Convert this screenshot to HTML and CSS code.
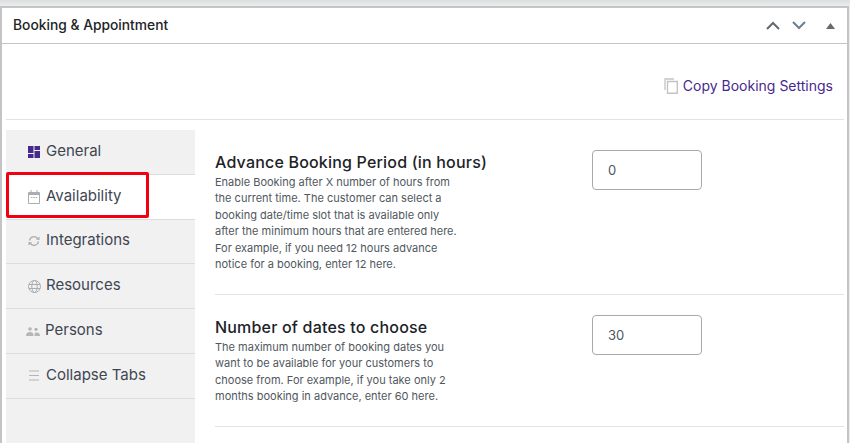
FILE: index.html
```html
<!DOCTYPE html>
<html lang="en">
<head>
<meta charset="utf-8">
<title>Booking &amp; Appointment</title>
<link rel="stylesheet" href="styles.css">
</head>
<body>
<div class="panel">
  <header class="panel-head">
    <h2 class="panel-title">Booking &amp; Appointment</h2>
    <div class="panel-actions">
      <svg class="chev" width="14" height="9" viewBox="0 0 14 9"><path d="M1 8l6-6 6 6" fill="none" stroke="#646970" stroke-width="2"/></svg>
      <svg class="chev" width="14" height="9" viewBox="0 0 14 9"><path d="M1 1l6 6 6-6" fill="none" stroke="#6a7f92" stroke-width="2"/></svg>
      <svg class="tri" width="9" height="6" viewBox="0 0 9 6"><path d="M4.5 0L9 6H0z" fill="#646970"/></svg>
    </div>
  </header>
  <div class="panel-body">
    <div class="copy-row">
      <a class="copy-link">
        <svg width="14" height="16" viewBox="0 0 14 16"><path d="M10 1H1v11" fill="none" stroke="#c3c4c7" stroke-width="1.3"/><path d="M3.5 3.5h9.8v11.8H3.5z" fill="none" stroke="#c3c4c7" stroke-width="1.4"/></svg>
        Copy Booking Settings
      </a>
    </div>
    <div class="layout">
      <nav class="tabs">
        <div class="tab">
          <svg class="ico" width="12" height="12" viewBox="0 0 12 12"><path d="M0 0h5.5v7H0zM6.5 0H12v4H6.5zM0 8h5.5v4H0zM6.5 5H12v7H6.5z" fill="#46298f"/></svg>
          <span class="tab-label">General</span>
        </div>
        <div class="tab tab-active">
          <svg class="ico" width="12" height="14" viewBox="0 0 12 14"><path d="M2.5 0h1v2h5V0h1v2H11a1 1 0 0 1 1 1v10a1 1 0 0 1-1 1H1a1 1 0 0 1-1-1V3a1 1 0 0 1 1-1h1.500zM1 5v8h10V5z" fill="#a9acb0"/><path d="M3 7h1.500v1H3zM5.300 7h1.500v1H5.300zM7.600 7h1.500v1H7.600z" fill="#a9acb0"/></svg>
          <span class="tab-label">Availability</span>
        </div>
        <div class="tab">
          <svg class="ico" width="14" height="12" viewBox="0 0 13 12"><path d="M2 5.500a4.500 4.500 0 0 1 8-2M11 6.500a4.500 4.500 0 0 1-8 2" fill="none" stroke="#a9acb0" stroke-width="1.300"/><path d="M8.500 4.500L12 5V1.500zM4.500 7.500L1 7v3.500z" fill="#a9acb0"/></svg>
          <span class="tab-label">Integrations</span>
        </div>
        <div class="tab">
          <svg class="ico" width="13" height="13" viewBox="0 0 13 13"><g fill="none" stroke="#a9acb0" stroke-width="1"><circle cx="6.500" cy="6.500" r="6"/><ellipse cx="6.500" cy="6.500" rx="2.700" ry="6"/><path d="M1 4.500h11M1 8.500h11"/></g></svg>
          <span class="tab-label">Resources</span>
        </div>
        <div class="tab tab-persons">
          <svg class="ico" width="14" height="9" viewBox="0 0 14 9"><circle cx="4" cy="2" r="1.800" fill="#b4b6ba"/><circle cx="10" cy="2.300" r="1.500" fill="#a9acb0"/><path d="M0 9c0-3 1.500-4 4-4s3.500 1 3.500 4zM8.500 9c0-2.500 0-3.500 2-3.500S14 6.500 14 9z" fill="#b4b6ba"/></svg>
          <span class="tab-label">Persons</span>
        </div>
        <div class="tab">
          <svg class="ico" width="10" height="11" viewBox="0 0 10 11"><path d="M0 1h10M0 5.500h10M0 10h10" fill="none" stroke="#b4b6ba" stroke-width="1.200"/></svg>
          <span class="tab-label">Collapse Tabs</span>
        </div>
      </nav>
      <div class="content">
        <section class="field field-first">
          <div class="field-text">
            <h3 class="field-title">Advance Booking Period (in hours)</h3>
            <p class="field-desc">Enable Booking after X number of hours from<br>the current time. The customer can select a<br>booking date/time slot that is available only<br>after the minimum hours that are entered here.<br>For example, if you need 12 hours advance<br>notice for a booking, enter 12 here.</p>
          </div>
          <input class="field-input" type="text" value="0">
        </section>
        <section class="field field-second">
          <div class="field-text">
            <h3 class="field-title">Number of dates to choose</h3>
            <p class="field-desc">The maximum number of booking dates you<br>want to be available for your customers to<br>choose from. For example, if you take only 2<br>months booking in advance, enter 60 here.</p>
          </div>
          <input class="field-input" type="text" value="30">
        </section>
      </div>
    </div>
    <div class="highlight"></div>
  </div>
</div>
</body>
</html>
```
FILE: styles.css
```css
* { box-sizing: border-box; }
html, body { margin: 0; height: 100%; overflow: hidden; }
body {
  background: linear-gradient(#dcdedf, #eceded 6px);
  font-family: Inter, "Liberation Sans", sans-serif;
  color: #1d2327;
  padding: 6px 1px 0 0;
}
.panel {
  height: 437px;
  background: #fff;
  border: 1px solid #c3c4c7;
  border-width: 2px 2px 0 2px;
  overflow: hidden;
}
.panel-head {
  height: 36px;
  display: flex;
  align-items: center;
  justify-content: space-between;
  border-bottom: 1px solid #c3c4c7;
  padding: 0 12px 0 11px;
}
.panel-title { margin: 0; font-size: 13.800px; font-weight: 500; line-height: 1; }
.panel-actions { display: flex; align-items: center; }
.chev { margin-right: 12px; }
.tri { margin-left: 8px; }
.panel-body { position: relative; padding: 0 3px 0 4px; height: 399px; }
.copy-row {
  height: 76px;
  display: flex;
  align-items: flex-end;
  justify-content: flex-end;
  padding: 0 11px 24px 0;
  border-bottom: 1px solid #e2e3e5;
}
.copy-link {
  display: flex;
  align-items: center;
  gap: 5px;
  color: #46298f;
  font-size: 14px;
  line-height: 18px;
}
.layout { display: flex; margin-top: 10px; }
.tabs { width: 189px; height: 400px; flex: none; background: #f1f1f1; }
.tab {
  height: 44.800px;
  display: grid;
  grid-template-columns: 12px 1fr;
  column-gap: 6px;
  align-items: center;
  justify-items: center;
  padding: 0 0 3px 22px;
  border-bottom: 1px solid #dcdcde;
  font-size: 15px;
  color: #3f4652;
}
.tab-label { justify-self: start; }
.tab-active { background: #fff; }
.tab-persons { padding-left: 20px; grid-template-columns: 14px 1fr; column-gap: 5px; }
.ico { margin-top: 3px; }
.content { flex: 1; padding-left: 20px; min-width: 0; }
.field { display: flex; border-bottom: 1px solid #e2e3e5; }
.field-first { height: 165px; padding-top: 20px; }
.field-second { height: 132px; padding-top: 20px; }
.field-text { width: 377px; flex: none; }
.field-title {
  margin: 2px 0 2px;
  font-size: 16px;
  font-weight: 500;
  line-height: 20px;
  letter-spacing: 0.19px;
}
.field-desc {
  margin: 0;
  font-size: 11px;
  line-height: 16.400px;
  color: #50575e;
}
.field-input {
  width: 110px;
  height: 40px;
  border: 1px solid #a7aaad;
  border-radius: 4px;
  padding: 0 15px;
  font: 13px Inter, "Liberation Sans", sans-serif;
  color: #50575e;
  background: #fff;
}
.highlight {
  position: absolute;
  left: 4px;
  top: 128px;
  width: 143px;
  height: 46px;
  border: 3px solid #f10012;
  border-radius: 2px;
}
```
